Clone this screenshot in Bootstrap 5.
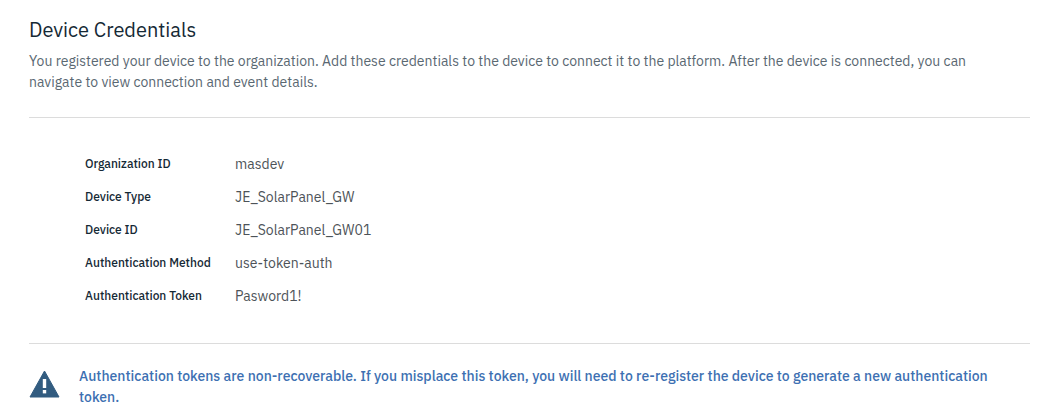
<!DOCTYPE html>
<html lang="en"><head><meta charset="utf-8">
<link href="https://cdn.jsdelivr.net/npm/bootstrap@5.3.0/dist/css/bootstrap.min.css" rel="stylesheet">
<style>
html,body{height:420px;overflow:hidden}
body{font-family:"IBM Plex Sans","Noto Sans","Open Sans",sans-serif;color:#3d3d3d;background:#fff;padding:18px 21px 0 29px}
.ttl{font-size:20px;line-height:24px;font-weight:400;color:#152935;margin:0 0 9px}
.intro{font-size:14px;line-height:21px;margin:0;color:#5a6872;max-width:945px}
.rule{border:0;border-top:1px solid #dcdcdc;opacity:1;margin:0}
.rule-top{margin-top:24px}
.details{padding:30px 0 0 56px;height:225px}
.drow{height:33px;font-size:14px;line-height:33px;color:#4d5358}
.dlabel{width:150px;font-size:12px;font-weight:500;line-height:31px;color:#152935}
.warn{color:#3d70b2;font-size:14px;font-weight:500;line-height:21px}
.warnbox{padding-top:22px;column-gap:19px}
.warnicon{margin-top:4px}
</style></head><body>
<h1 class="ttl">Device Credentials</h1>
<p class="intro">You registered your device to the organization. Add these credentials to the device to connect it to the platform. After the device is connected, you can navigate to view connection and event details.</p>
<hr class="rule rule-top">
<div class="details">
<div class="drow d-flex"><div class="dlabel">Organization ID</div><div>masdev</div></div>
<div class="drow d-flex"><div class="dlabel">Device Type</div><div>JE_SolarPanel_GW</div></div>
<div class="drow d-flex"><div class="dlabel">Device ID</div><div>JE_SolarPanel_GW01</div></div>
<div class="drow d-flex"><div class="dlabel">Authentication Method</div><div>use-token-auth</div></div>
<div class="drow d-flex"><div class="dlabel">Authentication Token</div><div>Pasword1!</div></div>
</div>
<hr class="rule">
<div class="d-flex align-items-start warnbox">
<svg width="31" height="28" viewBox="0 0 31 28" class="flex-shrink-0 warnicon"><path d="M15.5 1 L30 27 H1 Z" fill="#325c80" stroke="#325c80" stroke-linejoin="round"/><rect x="13.8" y="9" width="3.4" height="9" fill="#fff"/><rect x="13.8" y="20" width="3.4" height="3.4" fill="#fff"/></svg>
<div class="warn">Authentication tokens are non-recoverable. If you misplace this token, you will need to re-register the device to generate a new authentication token.</div>
</div>
<script src="https://cdn.jsdelivr.net/npm/bootstrap@5.3.0/dist/js/bootstrap.bundle.min.js"></script>
</body></html>
